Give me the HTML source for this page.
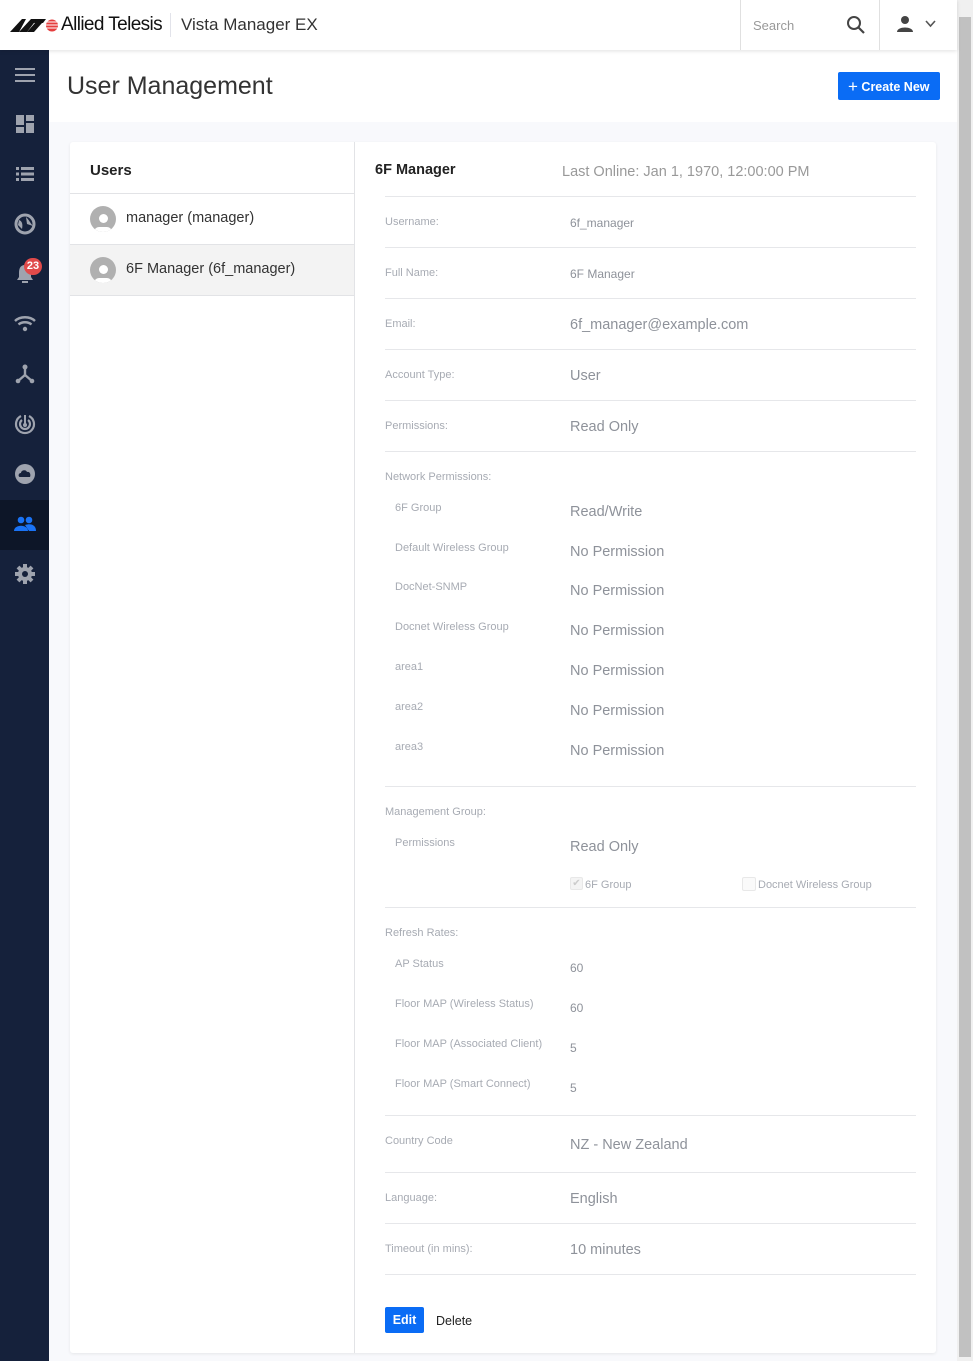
<!DOCTYPE html>
<html><head><meta charset="utf-8"><style>
*{margin:0;padding:0;box-sizing:border-box}
body{width:973px;height:1361px;overflow:hidden;background:#f8f9fc;font-family:"Liberation Sans",sans-serif;position:relative}
.a{position:absolute;white-space:nowrap}
.top{left:0;top:0;width:957px;height:50px;background:#fff;box-shadow:0 1px 4px rgba(0,0,0,.12);z-index:2}
.side{left:0;top:50px;width:49px;height:1311px;background:#15213b}
.ic{position:absolute;left:13px;width:24px;height:24px}
.card{left:70px;top:142px;width:866px;height:1211px;background:#fff;border-radius:3px;box-shadow:0 1px 3px rgba(0,0,0,.08)}
.l{font-size:11px;color:#a7abb3;line-height:14px}
.v{font-size:14.5px;color:#8e929a;line-height:18px}
.hr{left:385px;width:531px;height:1px;background:#e6e7ea}
</style></head><body>
<div class="a" style="left:49px;top:50px;width:908px;height:72px;background:#fff"></div>
<div class="a top">
  <svg class="a" style="left:10px;top:17px" width="50" height="16" viewBox="0 0 50 16">
    <polygon points="0,15 12,2 16,2 9,15" fill="#111"/>
    <polygon points="9,15 21,2 27,2 17,15" fill="#111"/>
    <polygon points="17,15 25,6 32,6 24,15" fill="#111"/>
    <polygon points="26,2 36,2 33,6 24,6" fill="#111"/>
    <circle cx="42" cy="8.5" r="6" fill="#e53d3d"/>
    <g stroke="#fff" stroke-width="1"><line x1="35" y1="5" x2="49" y2="5"/><line x1="35" y1="8" x2="49" y2="8"/><line x1="35" y1="11" x2="49" y2="11"/></g>
  </svg>
  <div class="a" style="left:61px;top:14px;font-size:19px;color:#111;letter-spacing:-0.6px">Allied Telesis</div>
  <div class="a" style="left:170px;top:13px;width:1px;height:24px;background:#e2e3ea"></div>
  <div class="a" style="left:181px;top:15px;font-size:17px;color:#333">Vista Manager EX</div>
  <div class="a" style="left:740px;top:0;width:1px;height:50px;background:#e0e0e0"></div>
  <div class="a" style="left:753px;top:18px;font-size:13px;color:#999">Search</div>
  <svg class="a" style="left:846px;top:15px" width="20" height="20" viewBox="0 0 20 20"><circle cx="8" cy="8" r="6" fill="none" stroke="#444" stroke-width="2"/><line x1="12.5" y1="12.5" x2="18" y2="18" stroke="#444" stroke-width="2.2"/></svg>
  <div class="a" style="left:879px;top:0;width:1px;height:50px;background:#e0e0e0"></div>
  <svg class="a" style="left:896px;top:15px" width="18" height="18" viewBox="0 0 18 18"><circle cx="9" cy="5" r="4" fill="#444"/><path d="M1 17 C1 11 17 11 17 17Z" fill="#444"/></svg>
  <svg class="a" style="left:925px;top:20px" width="11" height="8" viewBox="0 0 11 8"><path d="M1 1 L5.5 6 L10 1" fill="none" stroke="#555" stroke-width="1.6"/></svg>
</div>
<div class="a" style="left:957px;top:0;width:16px;height:1361px;background:#f0f0f0"></div>
<div class="a" style="left:959px;top:17px;width:12px;height:1340px;background:#c1c1c1"></div>
<div class="a side">
  <svg class="ic" style="top:13px" viewBox="0 0 24 24"><g stroke="#9ea3ae" stroke-width="2"><line x1="2" y1="6" x2="22" y2="6"/><line x1="2" y1="12" x2="22" y2="12"/><line x1="2" y1="18" x2="22" y2="18"/></g></svg>
  <svg class="ic" style="top:62px" viewBox="0 0 24 24"><g fill="#9ea3ae"><rect x="3" y="3" width="8" height="10"/><rect x="13" y="3" width="8" height="6"/><rect x="3" y="15" width="8" height="6"/><rect x="13" y="11" width="8" height="10"/></g></svg>
  <svg class="ic" style="top:112px" viewBox="0 0 24 24"><g fill="#9ea3ae"><rect x="3" y="5" width="3" height="3"/><rect x="8" y="5" width="13" height="3"/><rect x="3" y="10.5" width="3" height="3"/><rect x="8" y="10.5" width="13" height="3"/><rect x="3" y="16" width="3" height="3"/><rect x="8" y="16" width="13" height="3"/></g></svg>
  <svg class="ic" style="top:162px" viewBox="0 0 24 24"><circle cx="12" cy="12" r="9" fill="none" stroke="#9ea3ae" stroke-width="3"/><path d="M6 8 C9 9 10 12 9 17 L5 13Z M13 5 C16 8 18 12 20 14 L14 12Z" fill="#9ea3ae"/></svg>
  <svg class="ic" style="top:212px" viewBox="0 0 24 24"><path d="M12 3 C7 3 6 7 6 11 L6 15 L4 18 L20 18 L18 15 L18 11 C18 7 17 3 12 3Z" fill="#9ea3ae"/><rect x="9" y="19" width="6" height="2" fill="#9ea3ae"/></svg>
  <div class="a" style="left:24px;top:208px;width:18px;height:17px;border-radius:9px;background:#e04a4a;color:#fff;font-size:11px;font-weight:bold;text-align:center;line-height:17px">23</div>
  <svg class="ic" style="top:262px" viewBox="0 0 24 24"><g fill="none" stroke="#9ea3ae" stroke-width="2.4"><path d="M2 9 C7 4 17 4 22 9"/><path d="M5.5 12.5 C9 9.5 15 9.5 18.5 12.5"/></g><circle cx="12" cy="17" r="2.2" fill="#9ea3ae"/></svg>
  <svg class="ic" style="top:312px" viewBox="0 0 24 24"><g stroke="#9ea3ae" stroke-width="2.4"><line x1="12" y1="5" x2="12" y2="13"/><line x1="12" y1="13" x2="5" y2="19"/><line x1="12" y1="13" x2="19" y2="19"/></g><circle cx="12" cy="5" r="2.5" fill="#9ea3ae"/><circle cx="5" cy="19" r="2.3" fill="#9ea3ae"/><circle cx="19" cy="19" r="2.3" fill="#9ea3ae"/></svg>
  <svg class="ic" style="top:362px" viewBox="0 0 24 24"><g fill="none" stroke="#9ea3ae" stroke-width="2.2"><path d="M8 4 A9 9 0 1 0 16 4"/><path d="M9 8 A5 5 0 1 0 15 8"/></g><circle cx="12" cy="13" r="2" fill="#9ea3ae"/><line x1="12" y1="3" x2="12" y2="13" stroke="#9ea3ae" stroke-width="2"/></svg>
  <svg class="ic" style="top:412px" viewBox="0 0 24 24"><circle cx="12" cy="12" r="10" fill="#9ea3ae"/><path d="M7 15 C5 15 5 11 8 11 C8 8 13 7 14 10 C17 9 18 13 17 15Z" fill="#15213b"/></svg>
  <div class="a" style="left:0;top:450px;width:49px;height:50px;background:#0d1628"></div>
  <svg class="ic" style="top:463px" viewBox="0 0 24 24"><g fill="#1a73f5"><circle cx="8" cy="7" r="3.3"/><circle cx="16" cy="7" r="3.3"/><path d="M1 18 C1 11 15 11 15 18Z"/><path d="M12 12 C18 10 23 12 23 18 L16 18Z"/></g></svg>
  <svg class="ic" style="top:512px" viewBox="0 0 24 24"><g fill="#9ea3ae"><circle cx="12" cy="12" r="7"/><g stroke="#9ea3ae" stroke-width="4"><line x1="12" y1="2" x2="12" y2="22"/><line x1="2" y1="12" x2="22" y2="12"/><line x1="5" y1="5" x2="19" y2="19"/><line x1="19" y1="5" x2="5" y2="19"/></g></g><circle cx="12" cy="12" r="3" fill="#15213b"/></svg>
</div>
<div class="a" style="left:67px;top:72px;font-size:25px;color:#333">User Management</div>
<div class="a" style="left:838px;top:72px;width:102px;height:28px;background:#0a6cf5;border-radius:2px;color:#fff;font-size:12.5px;font-weight:bold;line-height:30px;padding-left:10px"><span style="font-size:17px;font-weight:normal;vertical-align:-1px">+</span> Create New</div>
<div class="a card"></div>
<div class="a" style="left:354px;top:142px;width:1px;height:1211px;background:#e2e3e6"></div>
<div class="a" style="left:90px;top:162px;font-size:15px;font-weight:bold;color:#222">Users</div>
<div class="a" style="left:70px;top:193px;width:284px;height:1px;background:#e2e3e6"></div>
<div class="a" style="left:70px;top:244px;width:284px;height:52px;background:#f3f3f3;border-top:1px solid #e2e3e6;border-bottom:1px solid #e2e3e6"></div>
<div class="a" style="left:90px;top:206px;width:26px;height:26px;border-radius:13px;background:#b0b0b0;overflow:hidden"><div style="position:absolute;left:9px;top:8px;width:9px;height:9px;border-radius:5px;background:#fff"></div><div style="position:absolute;left:4px;top:21px;width:18px;height:10px;border-radius:9px;background:#fff"></div></div>
<div class="a" style="left:126px;top:210px;font-size:14.5px;color:#333">manager (manager)</div>
<div class="a" style="left:90px;top:257px;width:26px;height:26px;border-radius:13px;background:#b0b0b0;overflow:hidden"><div style="position:absolute;left:9px;top:8px;width:9px;height:9px;border-radius:5px;background:#fff"></div><div style="position:absolute;left:4px;top:21px;width:18px;height:10px;border-radius:9px;background:#fff"></div></div>
<div class="a" style="left:126px;top:261px;font-size:14.5px;color:#333">6F Manager (6f_manager)</div>

<div class="a" style="left:375px;top:162px;font-size:14.5px;font-weight:bold;color:#222">6F Manager</div>
<div class="a" style="left:562px;top:164px;font-size:14.5px;color:#999">Last Online: Jan 1, 1970, 12:00:00 PM</div>
<div class="a hr" style="top:196px"></div>
<div class="a l" style="left:385px;top:215px">Username:</div><div class="a v" style="left:570px;top:214px;font-size:12px">6f_manager</div>
<div class="a hr" style="top:247px"></div>
<div class="a l" style="left:385px;top:266px">Full Name:</div><div class="a v" style="left:570px;top:265px;font-size:12px">6F Manager</div>
<div class="a hr" style="top:298px"></div>
<div class="a l" style="left:385px;top:317px">Email:</div><div class="a v" style="left:570px;top:316px">6f_manager@example.com</div>
<div class="a hr" style="top:349px"></div>
<div class="a l" style="left:385px;top:368px">Account Type:</div><div class="a v" style="left:570px;top:367px">User</div>
<div class="a hr" style="top:400px"></div>
<div class="a l" style="left:385px;top:419px">Permissions:</div><div class="a v" style="left:570px;top:418px">Read Only</div>
<div class="a hr" style="top:451px"></div>
<div class="a l" style="left:385px;top:470px">Network Permissions:</div>
<div class="a l" style="left:395px;top:501px">6F Group</div><div class="a v" style="left:570px;top:503px">Read/Write</div>
<div class="a l" style="left:395px;top:541px">Default Wireless Group</div><div class="a v" style="left:570px;top:543px">No Permission</div>
<div class="a l" style="left:395px;top:580px">DocNet-SNMP</div><div class="a v" style="left:570px;top:582px">No Permission</div>
<div class="a l" style="left:395px;top:620px">Docnet Wireless Group</div><div class="a v" style="left:570px;top:622px">No Permission</div>
<div class="a l" style="left:395px;top:660px">area1</div><div class="a v" style="left:570px;top:662px">No Permission</div>
<div class="a l" style="left:395px;top:700px">area2</div><div class="a v" style="left:570px;top:702px">No Permission</div>
<div class="a l" style="left:395px;top:740px">area3</div><div class="a v" style="left:570px;top:742px">No Permission</div>
<div class="a hr" style="top:786px"></div>
<div class="a l" style="left:385px;top:805px">Management Group:</div>
<div class="a l" style="left:395px;top:836px">Permissions</div><div class="a v" style="left:570px;top:838px">Read Only</div>
<div class="a" style="left:570px;top:877px;width:13px;height:13px;border:1px solid #e8e8e8;border-radius:2px;background:#f4f4f4;color:#ccc;font-size:10px;line-height:11px;text-align:center">✔</div>
<div class="a l" style="left:585px;top:878px">6F Group</div>
<div class="a" style="left:742px;top:877px;width:14px;height:14px;border:1px solid #e8e8e8;border-radius:2px;background:#fafafa"></div>
<div class="a l" style="left:758px;top:878px">Docnet Wireless Group</div>
<div class="a hr" style="top:907px"></div>
<div class="a l" style="left:385px;top:926px">Refresh Rates:</div>
<div class="a l" style="left:395px;top:957px">AP Status</div><div class="a v" style="left:570px;top:959px;font-size:12px">60</div>
<div class="a l" style="left:395px;top:997px">Floor MAP (Wireless Status)</div><div class="a v" style="left:570px;top:999px;font-size:12px">60</div>
<div class="a l" style="left:395px;top:1037px">Floor MAP (Associated Client)</div><div class="a v" style="left:570px;top:1039px;font-size:12px">5</div>
<div class="a l" style="left:395px;top:1077px">Floor MAP (Smart Connect)</div><div class="a v" style="left:570px;top:1079px;font-size:12px">5</div>
<div class="a hr" style="top:1115px"></div>
<div class="a l" style="left:385px;top:1134px">Country Code</div><div class="a v" style="left:570px;top:1136px">NZ - New Zealand</div>
<div class="a hr" style="top:1172px"></div>
<div class="a l" style="left:385px;top:1191px">Language:</div><div class="a v" style="left:570px;top:1190px">English</div>
<div class="a hr" style="top:1223px"></div>
<div class="a l" style="left:385px;top:1242px">Timeout (in mins):</div><div class="a v" style="left:570px;top:1241px">10 minutes</div>
<div class="a hr" style="top:1274px"></div>
<div class="a" style="left:385px;top:1307px;width:39px;height:26px;background:#0a6cf5;border-radius:2px;color:#fff;font-size:12.5px;font-weight:bold;line-height:27px;text-align:center">Edit</div>
<div class="a" style="left:436px;top:1314px;font-size:12.5px;color:#222">Delete</div>
</body></html>
